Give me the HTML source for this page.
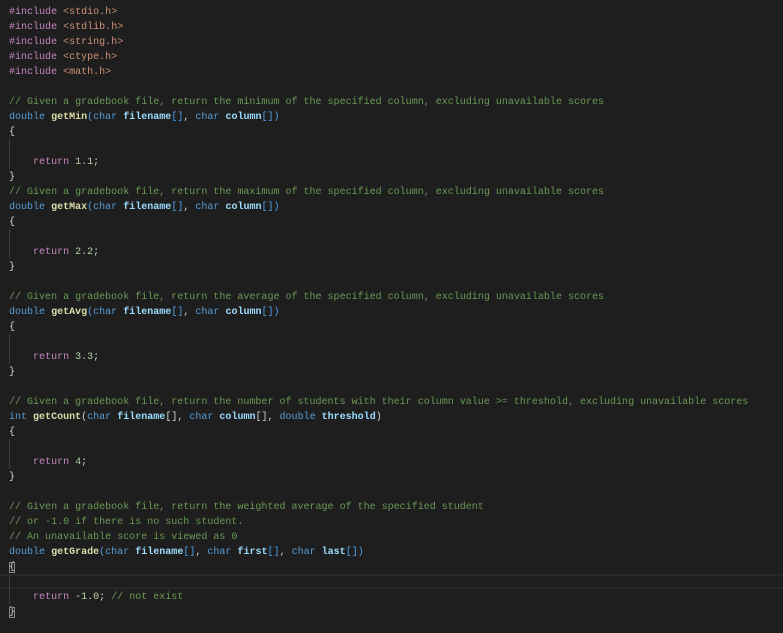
<!DOCTYPE html>
<html><head><meta charset="utf-8"><style>
html,body{margin:0;padding:0;background:#1e1e1e;width:783px;height:633px;overflow:hidden}
#c{position:absolute;left:9px;top:4.5px;font-family:"Liberation Mono",monospace;font-size:10.03px;line-height:15px;color:#d4d4d4;white-space:pre}
.l{height:15px;position:relative}
.p{color:#c586c0}.s{color:#ce9178}.c{color:#6a9955}.k{color:#569cd6}.f{color:#dcdcaa;font-weight:bold}.v{color:#9cdcfe;font-weight:bold}.n{color:#b5cea8}.b{color:#4fa0e8}
.g{position:absolute;left:9px;width:1px;background:#404040}
.cur{position:absolute;left:0;width:783px;top:574px;height:15px;border-top:2px solid #282828;border-bottom:2px solid #282828;box-sizing:border-box}
.bm{outline:1px solid #888;outline-offset:-1px}
</style></head><body>
<div class="cur"></div>
<div class="g" style="top:139px;height:30px"></div>
<div class="g" style="top:229px;height:30px"></div>
<div class="g" style="top:334px;height:30px"></div>
<div class="g" style="top:439px;height:30px"></div>
<div class="g" style="top:574px;height:30px"></div>
<div id="c"><div class="l"><span class="p">#include</span> <span class="s">&lt;stdio.h&gt;</span></div><div class="l"><span class="p">#include</span> <span class="s">&lt;stdlib.h&gt;</span></div><div class="l"><span class="p">#include</span> <span class="s">&lt;string.h&gt;</span></div><div class="l"><span class="p">#include</span> <span class="s">&lt;ctype.h&gt;</span></div><div class="l"><span class="p">#include</span> <span class="s">&lt;math.h&gt;</span></div><div class="l"></div><div class="l"><span class="c">// Given a gradebook file, return the minimum of the specified column, excluding unavailable scores</span></div><div class="l"><span class="k">double</span> <span class="f">getMin</span><span class="b">(</span><span class="k">char</span> <span class="v">filename</span><span class="b">[]</span>, <span class="k">char</span> <span class="v">column</span><span class="b">[])</span></div><div class="l">{</div><div class="l"></div><div class="l">    <span class="p">return</span> <span class="n">1.1</span>;</div><div class="l">}</div><div class="l"><span class="c">// Given a gradebook file, return the maximum of the specified column, excluding unavailable scores</span></div><div class="l"><span class="k">double</span> <span class="f">getMax</span><span class="b">(</span><span class="k">char</span> <span class="v">filename</span><span class="b">[]</span>, <span class="k">char</span> <span class="v">column</span><span class="b">[])</span></div><div class="l">{</div><div class="l"></div><div class="l">    <span class="p">return</span> <span class="n">2.2</span>;</div><div class="l">}</div><div class="l"></div><div class="l"><span class="c">// Given a gradebook file, return the average of the specified column, excluding unavailable scores</span></div><div class="l"><span class="k">double</span> <span class="f">getAvg</span><span class="b">(</span><span class="k">char</span> <span class="v">filename</span><span class="b">[]</span>, <span class="k">char</span> <span class="v">column</span><span class="b">[])</span></div><div class="l">{</div><div class="l"></div><div class="l">    <span class="p">return</span> <span class="n">3.3</span>;</div><div class="l">}</div><div class="l"></div><div class="l"><span class="c">// Given a gradebook file, return the number of students with their column value &gt;= threshold, excluding unavailable scores</span></div><div class="l"><span class="k">int</span> <span class="f">getCount</span>(<span class="k">char</span> <span class="v">filename</span>[], <span class="k">char</span> <span class="v">column</span>[], <span class="k">double</span> <span class="v">threshold</span>)</div><div class="l">{</div><div class="l"></div><div class="l">    <span class="p">return</span> <span class="n">4</span>;</div><div class="l">}</div><div class="l"></div><div class="l"><span class="c">// Given a gradebook file, return the weighted average of the specified student</span></div><div class="l"><span class="c">// or -1.0 if there is no such student.</span></div><div class="l"><span class="c">// An unavailable score is viewed as 0</span></div><div class="l"><span class="k">double</span> <span class="f">getGrade</span><span class="b">(</span><span class="k">char</span> <span class="v">filename</span><span class="b">[]</span>, <span class="k">char</span> <span class="v">first</span><span class="b">[]</span>, <span class="k">char</span> <span class="v">last</span><span class="b">[])</span></div><div class="l"><span class="bm">{</span></div><div class="l"></div><div class="l">    <span class="p">return</span> -<span class="n">1.0</span>; <span class="c">// not exist</span></div><div class="l"><span class="bm">}</span></div></div>
</body></html>
